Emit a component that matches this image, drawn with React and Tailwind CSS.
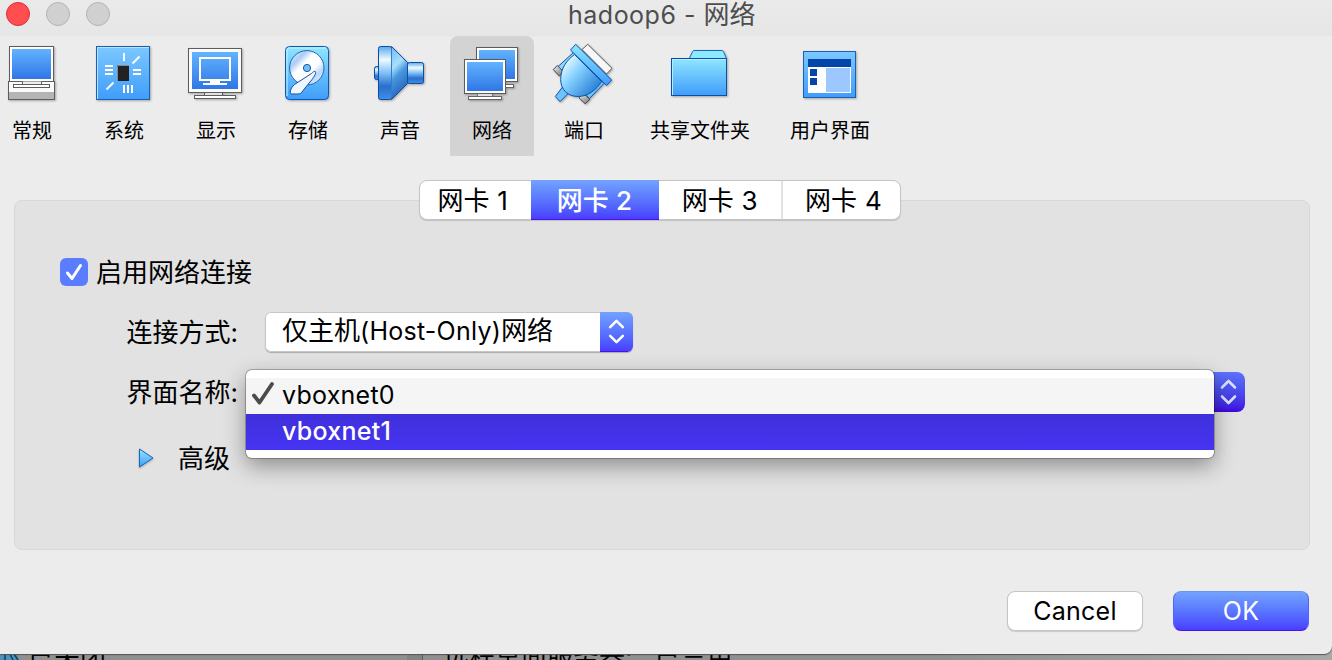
import React from "react";

function Defs() {
  return (
    <svg className="absolute h-0 w-0" aria-hidden="true">
      <defs>
        <linearGradient id="screen" x1="0" y1="0" x2="0" y2="1">
          <stop offset="0" stopColor="#62b3ff" />
          <stop offset="1" stopColor="#3076e6" />
        </linearGradient>
        <linearGradient id="sky" x1="0" y1="0" x2="0" y2="1">
          <stop offset="0" stopColor="#7cc8ff" />
          <stop offset="1" stopColor="#3f9dfb" />
        </linearGradient>
        <linearGradient id="cyan" x1="0" y1="0" x2="0" y2="1">
          <stop offset="0" stopColor="#8fe6ff" />
          <stop offset="1" stopColor="#3f9cfb" />
        </linearGradient>
        <linearGradient id="metal" x1="0" y1="0" x2="0" y2="1">
          <stop offset="0" stopColor="#5aa8ee" />
          <stop offset="0.25" stopColor="#f0fbff" />
          <stop offset="0.5" stopColor="#7fbff8" />
          <stop offset="0.75" stopColor="#2b6fcb" />
          <stop offset="1" stopColor="#3f8fe4" />
        </linearGradient>
        <linearGradient id="cone" x1="0" y1="0" x2="0.3" y2="1">
          <stop offset="0" stopColor="#6dbaf4" />
          <stop offset="0.4" stopColor="#a9e0fb" />
          <stop offset="0.6" stopColor="#4a97de" />
          <stop offset="1" stopColor="#2462bd" />
        </linearGradient>
        <linearGradient id="plug" x1="0.1" y1="0.2" x2="0.9" y2="0.9">
          <stop offset="0" stopColor="#e4f8ff" />
          <stop offset="0.35" stopColor="#84d0ff" />
          <stop offset="1" stopColor="#2179d2" />
        </linearGradient>
        <linearGradient id="disc" x1="0" y1="0" x2="1" y2="1">
          <stop offset="0" stopColor="#fff" />
          <stop offset="0.25" stopColor="#a9ccf6" />
          <stop offset="0.4" stopColor="#fff" />
          <stop offset="0.6" stopColor="#fff" />
          <stop offset="0.75" stopColor="#b9d8fb" />
          <stop offset="1" stopColor="#fff" />
        </linearGradient>
        <linearGradient id="gray" x1="0" y1="0" x2="1" y2="1">
          <stop offset="0" stopColor="#f6f6f6" />
          <stop offset="1" stopColor="#6c6c6c" />
        </linearGradient>
      </defs>
    </svg>
  );
}

function Icon({ children }) {
  return (
    <svg viewBox="0 0 64 64" className="h-16 w-16 shrink-0 overflow-visible drop-shadow-[1px_1px_1px_rgba(0,0,0,0.3)]">
      {children}
    </svg>
  );
}

const GeneralIcon = () => (
  <Icon>
    <rect x="9.5" y="6.5" width="44" height="35" fill="#fff" stroke="#5c5c5c" />
    <rect x="12" y="9" width="39" height="30" fill="url(#screen)" />
    <rect x="8.5" y="41.5" width="46" height="18" fill="#fafafa" stroke="#5c5c5c" />
    <rect x="9" y="52" width="45" height="7" fill="#b4b4b4" />
    <path d="M22.5 41.5v3h19v-3" fill="#eee" stroke="#5c5c5c" />
    <rect x="13.5" y="44.5" width="36" height="3" fill="#fff" stroke="#5c5c5c" />
  </Icon>
);

const SystemIcon = () => (
  <Icon>
    <rect x="4.5" y="6.5" width="53" height="53" fill="url(#sky)" stroke="#1c5fb0" />
    <path d="M5.5 59V7.5H57" stroke="#b8e4ff" fill="none" />
    <rect x="25" y="25" width="12" height="16" fill="#222" />
    <path d="M25.5 41V25.5H37" stroke="#8a8a8a" fill="none" />
    <path
      d="M32 13v8M40.5 23.5l7-7M13 26h8M13 30h8M13 34h8M41 30h8M41 34h8M32 45v8M36 45v8M40 45v8M14.5 49.5l7-7"
      stroke="#fff"
      strokeWidth="2"
      fill="none"
    />
  </Icon>
);

const DisplayIcon = () => (
  <Icon>
    <rect x="20.5" y="52.5" width="18" height="4" fill="#e2e2e2" stroke="#5c5c5c" />
    <rect x="4.5" y="8.5" width="53" height="44" fill="#fafafa" stroke="#5c5c5c" />
    <rect x="8" y="12" width="46" height="37" fill="url(#screen)" />
    <rect x="16" y="18" width="30" height="22" fill="none" stroke="#fff" strokeWidth="2" />
    <path d="M26 40h10v3h7v2H19v-2h7z" fill="#fff" />
    <rect x="10.5" y="55.5" width="41" height="3" fill="#fff" stroke="#5c5c5c" />
  </Icon>
);

const StorageIcon = () => (
  <Icon>
    <rect x="9.5" y="6.5" width="43" height="53" rx="4" fill="url(#cyan)" stroke="#0a58b8" />
    <path d="M11 56V10q0-2 2-2h37" stroke="#c4f3ff" fill="none" />
    <circle cx="30.8" cy="27.8" r="17.2" fill="url(#disc)" stroke="#2563b5" />
    <circle cx="31" cy="28" r="3.6" fill="#6cc4f6" stroke="#1753a3" />
    <path
      d="M39.400 31.600C38 31 37 32 35.500 33.500L18.500 44.500C16 46.500 14.500 49.500 14.200 52q-.2 2 1.500 2h6c2.500 0 3.800-1 5-3L36 39.500c2-3 4.500-6 3.400-7.900z"
      fill="#eef7ff"
      stroke="#174f9d"
    />
  </Icon>
);

const AudioIcon = () => (
  <Icon>
    <rect x="6.500" y="26.500" width="6" height="13" rx="2" fill="url(#metal)" stroke="#0a4fa6" />
    <path d="M23.500 6.500L39.500 22.500v21L23.500 59.500z" fill="url(#cone)" stroke="#0a4fa6" />
    <rect x="10.500" y="6.500" width="13" height="53" rx="2" fill="url(#metal)" stroke="#0a4fa6" />
    <path d="M23.500 7.500v51" stroke="#2f7fd0" />
    <rect x="39.500" y="22.500" width="16" height="21" rx="2" fill="url(#metal)" stroke="#0a4fa6" />
  </Icon>
);

const NetworkIcon = () => (
  <Icon>
    <rect x="40.500" y="44.500" width="13" height="3" fill="#fff" stroke="#666" />
    <rect x="16.500" y="7.500" width="41" height="34" fill="#fff" stroke="#5c5c5c" />
    <rect x="19" y="10" width="36" height="29" fill="url(#screen)" />
    <rect x="17.500" y="52.500" width="15" height="5" fill="#e2e2e2" stroke="#777" />
    <rect x="4.500" y="19.500" width="41" height="34" fill="#fff" stroke="#5c5c5c" />
    <rect x="7" y="22" width="36" height="29" fill="url(#screen)" />
    <rect x="8.500" y="56.500" width="33" height="3" fill="#fff" stroke="#666" />
  </Icon>
);

const PortIcon = () => (
  <Icon>
    <path d="M35.700 4.300L60 28.300 54.500 34 30 9.500z" fill="#f7f7f7" stroke="#555" strokeLinejoin="round" />
    <path d="M22 12l6 6L12.500 33.500 5.500 27z" fill="#8bd6ff" stroke="#0e54aa" />
    <path d="M5.300 25.500l6.500 6.500-4.500 4-6-6.500z" fill="url(#gray)" stroke="#444" strokeLinejoin="round" />
    <path d="M45.500 37l6.500 6.500L37.500 58.500l-6.500-6.500z" fill="#6fc2fb" stroke="#0e54aa" />
    <path d="M31.500 53.300l6.500 6-4.800 4.500-6.200-6z" fill="url(#gray)" stroke="#444" strokeLinejoin="round" />
    <path d="M10.500 47l6 6.200L8 61.700 3.300 56.500z" fill="#6fc2fb" stroke="#0e54aa" strokeLinejoin="round" />
    <path d="M22.500 14.500C15 20 8.700 28 8.700 39.500c0 10 7 17 17.300 17 9.500 0 18.500-6.500 23.500-15z" fill="url(#plug)" stroke="#0e54aa" />
    <path d="M23.700 4.300L59.700 40 54.500 45.500 18.500 10z" fill="url(#cyan)" stroke="#0e54aa" strokeLinejoin="round" />
  </Icon>
);

const FolderIcon = () => (
  <Icon>
    <path d="M21.300 18.500L24.500 11.500q.5-1 1.500-1h28q1 0 1.500 1l3 7z" fill="#8ee8ff" stroke="#1667bb" />
    <rect x="3.500" y="18.500" width="55" height="37" fill="url(#cyan)" stroke="#0b4fa5" />
    <path d="M4.500 55V19.500H58" stroke="#b5efff" fill="none" />
  </Icon>
);

const InterfaceIcon = () => (
  <Icon>
    <rect x="5.500" y="11.500" width="52" height="46" fill="url(#sky)" stroke="#1c5fb0" />
    <rect x="10" y="19" width="43" height="34" fill="#fff" />
    <rect x="10" y="19" width="43" height="8" fill="#0345a8" />
    <rect x="12" y="29" width="7" height="7" fill="#0345a8" />
    <rect x="12" y="38" width="7" height="7" fill="#0345a8" />
    <rect x="28" y="28" width="24" height="24" fill="#9cc8ff" />
  </Icon>
);

const tools = [
  { label: "常规", icon: GeneralIcon, width: "w-[84px]" },
  { label: "系统", icon: SystemIcon, width: "w-[84px]" },
  { label: "显示", icon: DisplayIcon, width: "w-[84px]" },
  { label: "存储", icon: StorageIcon, width: "w-[84px]" },
  { label: "声音", icon: AudioIcon, width: "w-[84px]" },
  { label: "网络", icon: NetworkIcon, width: "w-[84px]", active: true },
  { label: "端口", icon: PortIcon, width: "w-[84px]" },
  { label: "共享文件夹", icon: FolderIcon, width: "w-[132px]" },
  { label: "用户界面", icon: InterfaceIcon, width: "w-[112px]" },
];

function Toolbar() {
  return (
    <nav className="-ml-[10px] flex h-[120px] gap-2">
      {tools.map(({ label, icon: Glyph, width, active }) => (
        <button
          key={label}
          className={`${width} flex shrink-0 flex-col items-center rounded-t-lg pt-1 ${active ? "bg-[#d3d3d3]" : ""}`}
        >
          <Glyph />
          <span className="mt-3 text-[20px] leading-[30px] whitespace-nowrap">{label}</span>
        </button>
      ))}
    </nav>
  );
}

const tabs = [
  { number: 1, style: "w-[111px] pr-[5px] pt-px" },
  { number: 2, style: "w-[128px] pt-[3px] text-white -my-px h-10 bg-linear-to-b from-[#74a2ff] to-[#4a3cff] border-b border-[#4a10f0] font-medium" },
  { number: 3, style: "w-[123px] pt-px" },
  { number: 4, style: "w-[119px] pt-px border-l-2 border-[#e2e2e2] pl-1" },
];

function Chevrons({ dim }) {
  return (
    <svg viewBox="0 0 33 40" className="h-full w-[33px]" fill="none" stroke={dim ? "#d8e2ff" : "#fff"} strokeWidth="2.600" strokeLinecap="round" strokeLinejoin="round">
      <path d="M10 15.500L16.500 9l6.500 6.500M10 24.500l6.500 6.500 6.500-6.500" />
    </svg>
  );
}

function Latin({ children }) {
  return <span className="text-[25px] leading-none tracking-[0.25px]">{children}</span>;
}

export default function App() {
  return (
    <div className="relative flex h-[660px] w-[1332px] flex-col overflow-hidden bg-linear-to-r from-[#909090] from-70% to-[#a8a8a8] font-['Inter','Noto_Sans_CJK_SC',sans-serif] text-[26px] text-black">
      <Defs />
      <main className="relative z-10 flex h-[654px] shrink-0 flex-col rounded-br-lg bg-[#ececec] shadow-[0_1px_1px_#555]">
        <header className="flex h-9 shrink-0 items-start bg-linear-to-b from-[#eaeaea] to-[#e6e6e6]">
          <div className="flex w-[568px] gap-4 pt-[2px] pl-[6px]">
            <span className="size-6 rounded-full border border-[#e02b35] bg-[#ff4d50]" />
            <span className="size-6 rounded-full border border-[#b4b4b4] bg-[#d0d0d0]" />
            <span className="size-6 rounded-full border border-[#b4b4b4] bg-[#d0d0d0]" />
          </div>
          <h1 className="-mt-px leading-8 whitespace-pre text-[#4d4d4d]">
            <span className="text-[25px] leading-none tracking-[0.5px]">hadoop6 - </span>网络
          </h1>
        </header>

        <Toolbar />

        <div className="z-10 mt-6 ml-[419px] flex h-10 w-[482px] shrink-0 rounded-lg border border-[#c4c4c4] bg-white shadow-[0_1px_1px_rgba(0,0,0,0.15)]">
          {tabs.map((tab) => (
            <button key={tab.number} className={`${tab.style} box-border flex items-center justify-center leading-none whitespace-nowrap`}>
              <span className="whitespace-pre">网卡<span className="text-[26px] tracking-[0.5px]"> {tab.number}</span></span>
            </button>
          ))}
        </div>

        <section className="-mt-5 mx-[14px] mr-[22px] h-[350px] shrink-0 rounded-lg border border-[#d8d8d8] bg-[#e2e2e2] pt-[57px] pl-[45px]">
          <label className="flex h-7 items-center gap-2">
            <span className="flex size-7 items-center justify-center rounded-md bg-[#5a7dff]">
              <svg viewBox="0 0 28 28" className="size-7" fill="none" stroke="#fff" strokeWidth="3" strokeLinecap="round" strokeLinejoin="round">
                <path d="M7.500 15l4.500 5.500L20.500 7.500" />
              </svg>
            </span>
            <span className="pt-0.5 leading-7">启用网络连接</span>
          </label>

          <div className="mt-[26px] flex h-10 items-center">
            <span className="w-[178px] pt-px text-right leading-10">连接方式:</span>
            <div className="ml-[27px] flex h-10 w-[368px] justify-between overflow-hidden rounded-md bg-white shadow-[0_1px_1px_rgba(0,0,0,0.25),inset_0_0_0_1px_#c6c6c6]">
              <span className="pl-[17px] leading-[38px] whitespace-nowrap">仅主机<Latin>(Host-Only)</Latin>网络</span>
              <span className="h-10 w-[33px] border-b border-[#4a10f0] bg-linear-to-b from-[#74a2ff] to-[#4a3cff]">
                <Chevrons />
              </span>
            </div>
          </div>

          <div className="relative mt-5 flex h-10 items-center">
            <span className="w-[178px] pt-px text-right leading-10">界面名称:</span>
            <div className="ml-[27px] flex h-10 w-[980px] justify-end overflow-hidden rounded-lg bg-white">
              <span className="h-10 w-[33px] bg-linear-to-b from-[#5d72fa] to-[#4000e0]">
                <Chevrons dim />
              </span>
            </div>
            <ul className="absolute -top-[2px] left-[186px] w-[968px] rounded-md bg-white py-2 shadow-[0_0_0_1px_rgba(0,0,0,0.25),0_8px_22px_rgba(0,0,0,0.38)]">
              <li className="flex h-9 items-center bg-[#f5f5f5]">
                <svg viewBox="0 0 36 36" className="h-9 w-9" fill="none" stroke="#4b4b4b" strokeWidth="3.800" strokeLinecap="round" strokeLinejoin="round">
                  <path d="M8 17.500l5.500 7L26 6" />
                </svg>
                <span className="pb-0.5 leading-8"><Latin>vboxnet0</Latin></span>
              </li>
              <li className="flex h-9 items-center bg-linear-to-b from-[#3f30db] to-[#4634f2] pl-9 font-medium text-white">
                <span className="pb-0.5 leading-8"><Latin>vboxnet1</Latin></span>
              </li>
            </ul>
          </div>

          <div className="mt-[26px] flex h-10 items-center pl-[78px]">
            <svg viewBox="0 0 16 20" className="h-5 w-4 overflow-visible drop-shadow-[0_1px_1px_rgba(0,0,0,0.3)]">
              <path d="M1.500 1L15 10 1.500 19z" fill="url(#cyan)" stroke="#1764bd" strokeLinejoin="round" />
            </svg>
            <span className="ml-6 pt-px leading-10">高级</span>
          </div>
        </section>

        <footer className="mt-[41px] flex justify-end gap-[30px] pr-[23px]">
          <button className="flex h-10 w-[136px] items-center justify-center rounded-lg border border-[#c4c4c4] bg-white leading-none shadow-[0_1px_1px_rgba(0,0,0,0.15)]"><Latin>Cancel</Latin></button>
          <button className="flex h-10 w-[136px] items-center justify-center rounded-lg border border-t-[#6a94ee] border-r-[#5660f5] border-b-[#4a10f0] border-l-[#5660f5] bg-linear-to-b from-[#74a2ff] to-[#4a3cff] leading-none text-white"><Latin>OK</Latin></button>
        </footer>
      </main>

      <div className="flex h-[6px] items-start overflow-hidden">
        <svg viewBox="0 0 20 6" className="h-[6px] w-5 shrink-0">
          <path d="M0 0h17l2 6H0z" fill="#4b93b8" />
          <path d="M5 0v6M10 0l3 6M14 0l4 6" stroke="#173c5c" strokeWidth="1.500" />
        </svg>
        <span className="-mt-[13px] ml-2 w-[379px] leading-8">已关闭</span>
        <span className="h-[6px] w-4 border-r border-[#5e5e5e] bg-[#838383]" />
        <span className="-mt-[13px] ml-5 leading-8 whitespace-pre">远程桌面服务器:</span>
        <span className="-mt-[13px] ml-[22px] leading-8">已禁用</span>
      </div>
    </div>
  );
}
